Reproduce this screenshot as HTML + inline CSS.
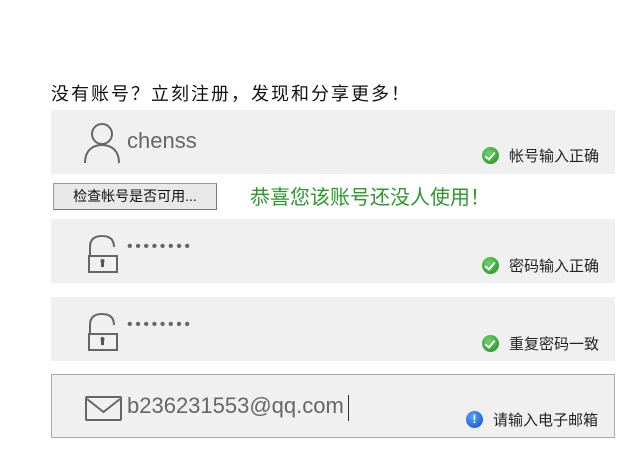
<!DOCTYPE html>
<html><head><meta charset="utf-8"><style>
body{margin:0;width:644px;height:449px;background:#fff;position:relative;overflow:hidden;font-family:"Liberation Sans","Noto Sans CJK SC",sans-serif;}
.a{position:absolute}
.box{position:absolute;left:51px;width:564px;height:64px;background:#f0f0f0;}
.val{position:absolute;left:76px;font-size:22px;color:#666;}
.dots{position:absolute;left:76px;font-size:16px;color:#666;letter-spacing:2.6px;}
.msg{position:absolute;right:16px;font-size:15px;color:#222;display:flex;align-items:center;}
.ok{width:17px;height:17px;border-radius:50%;background:radial-gradient(circle at 40% 35%,#6cd46c,#1c8a1c);margin-right:10px;position:relative;}
.ok:after{content:"";position:absolute;left:5px;top:3px;width:4px;height:8px;border:solid #fff;border-width:0 2.5px 2.5px 0;transform:rotate(40deg);}
.info{width:17px;height:17px;border-radius:50%;background:radial-gradient(circle at 40% 35%,#5aa0ff,#0a4fc4);margin-right:10px;color:#fff;font-size:12px;font-weight:bold;text-align:center;line-height:17px;}
</style></head><body>
<div class="a" style="left:51px;top:80px;font-size:18px;letter-spacing:2px;color:#111;">没有账号？立刻注册，发现和分享更多！</div>

<div class="box" style="top:110px;">
<svg class="a" style="left:32px;top:12px" width="40" height="42" viewBox="0 0 40 42"><circle cx="19" cy="12" r="10" fill="none" stroke="#666" stroke-width="2"/><path d="M2 41 C2 28 10 23 19 23 C28 23 36 28 36 41" fill="none" stroke="#666" stroke-width="2"/></svg>
<div class="val" style="top:18px;">chenss</div>
<div class="msg" style="top:35px;"><span class="ok"></span>帐号输入正确</div>
</div>

<div class="a" style="left:53px;top:183px;width:162px;height:25px;background:#e8e8e8;border:1px solid #999;border-right-color:#777;border-bottom-color:#777;font-size:14px;line-height:25px;text-align:center;color:#111;">检查帐号是否可用...</div>
<div class="a" style="left:250px;top:181px;font-size:20px;color:#2a9a2a;">恭喜您该账号还没人使用！</div>

<div class="box" style="top:219px;">
<svg class="a" style="left:36px;top:15px" width="34" height="40" viewBox="0 0 34 40"><path d="M3 22 V13 C3 5 8 2 15 2 C22 2 27 5 27 13" fill="none" stroke="#666" stroke-width="2"/><rect x="2" y="22" width="28" height="16" fill="none" stroke="#666" stroke-width="2"/><rect x="14" y="27" width="3" height="6" fill="#555"/><circle cx="15.5" cy="27" r="2" fill="#555"/></svg>
<div class="dots" style="top:19px;">••••••••</div>
<div class="msg" style="top:36px;"><span class="ok"></span>密码输入正确</div>
</div>

<div class="box" style="top:297px;">
<svg class="a" style="left:36px;top:15px" width="34" height="40" viewBox="0 0 34 40"><path d="M3 22 V13 C3 5 8 2 15 2 C22 2 27 5 27 13" fill="none" stroke="#666" stroke-width="2"/><rect x="2" y="22" width="28" height="16" fill="none" stroke="#666" stroke-width="2"/><rect x="14" y="27" width="3" height="6" fill="#555"/><circle cx="15.5" cy="27" r="2" fill="#555"/></svg>
<div class="dots" style="top:19px;">••••••••</div>
<div class="msg" style="top:36px;"><span class="ok"></span>重复密码一致</div>
</div>

<div class="box" style="top:374px;height:62px;width:562px;border:1px solid #aaa;">
<svg class="a" style="left:33px;top:21px" width="38" height="26" viewBox="0 0 38 26"><rect x="1" y="1" width="35" height="23" rx="1" fill="none" stroke="#666" stroke-width="2"/><path d="M2 3 L18.5 16 L35 3" fill="none" stroke="#666" stroke-width="2"/></svg>
<div class="val" style="top:18px;left:75px;">b236231553@qq.com</div>
<div class="a" style="left:296px;top:20px;width:1px;height:26px;background:#333;"></div>
<div class="msg" style="top:34px;"><span class="info">!</span>请输入电子邮箱</div>
</div>
</body></html>
